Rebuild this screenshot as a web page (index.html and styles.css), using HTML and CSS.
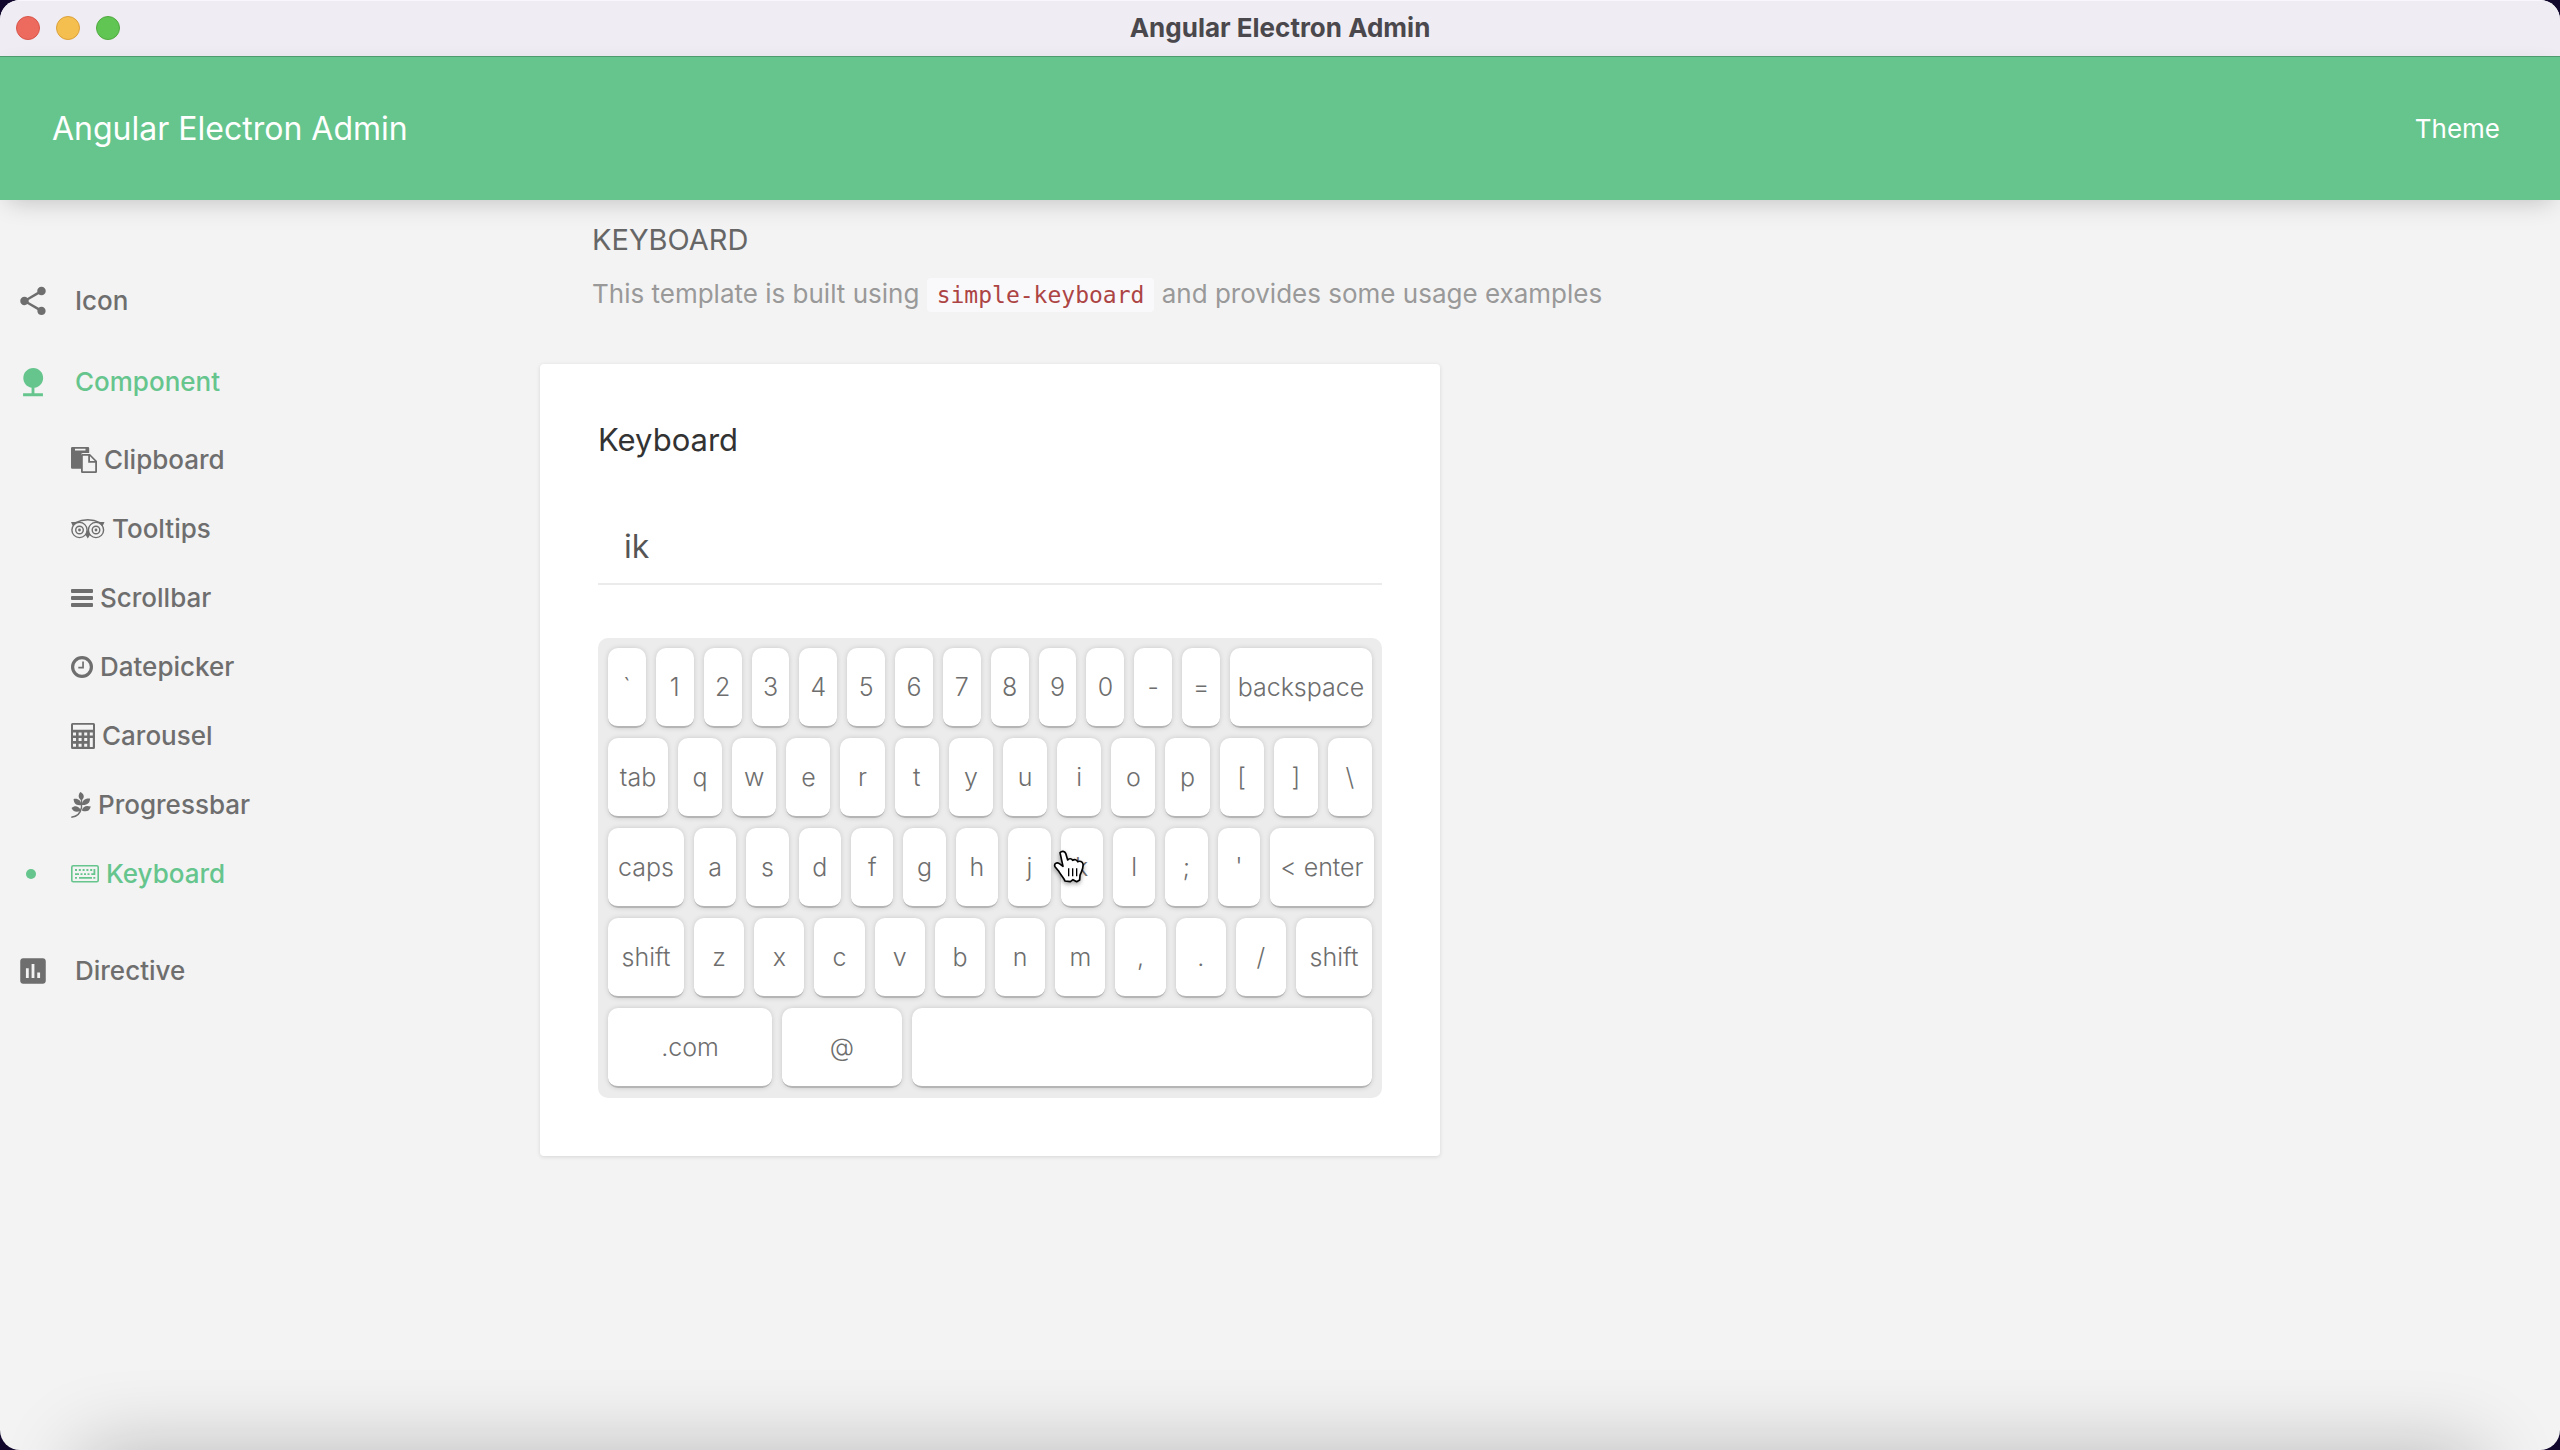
FILE: index.html
```html
<!DOCTYPE html>
<html lang="en">
<head>
<meta charset="utf-8">
<title>Angular Electron Admin</title>
<link rel="stylesheet" href="styles.css">
</head>
<body>
<div class="window">
  <div class="titlebar">
    <div class="lights">
      <button class="light light-close" aria-label="Close"></button>
      <button class="light light-min" aria-label="Minimize"></button>
      <button class="light light-max" aria-label="Zoom"></button>
    </div>
    <div class="window-title">Angular Electron Admin</div>
  </div>
  <header class="toolbar">
    <a class="brand" href="#">Angular Electron Admin</a>
    <button class="theme">Theme</button>
  </header>
  <div class="layout">
    <nav class="sidebar">
      <a class="item" href="#">
        <svg class="item-icon" viewBox="0 0 24 24"><path d="M18 16.08c-.76 0-1.44.3-1.96.77L8.91 12.7c.05-.23.09-.46.09-.7s-.04-.47-.09-.7l7.05-4.11c.54.5 1.25.81 2.04.81 1.66 0 3-1.34 3-3s-1.34-3-3-3-3 1.34-3 3c0 .24.04.47.09.7L8.04 9.81C7.5 9.31 6.79 9 6 9c-1.66 0-3 1.34-3 3s1.34 3 3 3c.79 0 1.5-.31 2.04-.81l7.12 4.16c-.05.21-.08.43-.08.65 0 1.61 1.31 2.92 2.92 2.92 1.61 0 2.92-1.31 2.92-2.92s-1.31-2.92-2.92-2.92z"/></svg>
        Icon
      </a>
      <a class="item active" href="#">
        <svg class="item-icon" viewBox="0 0 24 24"><path d="M13 16.12c3.47-.41 6.17-3.36 6.17-6.95 0-3.87-3.13-7-7-7s-7 3.13-7 7c0 3.47 2.52 6.34 5.83 6.89V20H5v2h14v-2h-6v-3.88z"/></svg>
        Component
      </a>
      <div class="submenu">
        <a class="sub" href="#">
          <svg width="26" height="26" viewBox="0 0 26 26"><path fill-rule="evenodd" d="M1.2 0H17a1.2 1.2 0 0 1 1.2 1.2V6H12a2 2 0 0 0-2 2v13.800H1.200A1.200 1.200 0 0 1 0 20.600V1.200A1.200 1.200 0 0 1 1.200 0zM4 1.800v1.800h10.500V1.800z"/><path fill-rule="evenodd" d="M11.200 7H19l7 7v10.800a1.200 1.200 0 0 1-1.200 1.200H11.200A1.200 1.200 0 0 1 10 24.800V8.200A1.200 1.200 0 0 1 11.200 7zm.6 1.800v15.400h12.400v-8.400h-7V8.800zM19 9.300V14h4.700z"/></svg>
          Clipboard
        </a>
        <a class="sub" href="#">
          <svg width="34" height="20" viewBox="0 0 34 20"><g fill="none" stroke="currentColor" stroke-width="1.400"><circle cx="8.500" cy="11" r="7.600"/><circle cx="25" cy="11" r="7.600"/><circle cx="8.500" cy="11" r="3.800"/><circle cx="25" cy="11" r="3.800"/><path d="M4 3.800Q16.800-2.200 29.500 3.800"/></g><circle cx="8.500" cy="11" r="1.400"/><circle cx="25" cy="11" r="1.400"/><path d="M0 3h6L2 7.500zM33.500 3h-6l4 4.500zM14.300 15.500L16.800 11l2.500 4.500-2.500 4z"/></svg>
          Tooltips
        </a>
        <a class="sub" href="#">
          <svg width="22" height="20" viewBox="0 0 22 20"><rect y="1" width="22" height="4" rx="1"/><rect y="8" width="22" height="4" rx="1"/><rect y="15" width="22" height="4" rx="1"/></svg>
          Scrollbar
        </a>
        <a class="sub" href="#">
          <svg width="22" height="22" viewBox="0 0 22 22"><circle cx="11" cy="11" r="9.400" fill="none" stroke="currentColor" stroke-width="3.200"/><path d="M11.200 5.500h1.700v7H7.300v-1.700h3.900z"/></svg>
          Datepicker
        </a>
        <a class="sub" href="#">
          <svg width="24" height="26" viewBox="0 0 24 26"><path fill-rule="evenodd" d="M1.500 0h21A1.500 1.500 0 0 1 24 1.500v23a1.500 1.500 0 0 1-1.500 1.500h-21A1.500 1.500 0 0 1 0 24.500v-23A1.500 1.500 0 0 1 1.500 0zM2 1.800v5h20v-5zM2 9.500v3h3v-3zm5.600 0v3h3v-3zm5.600 0v3h3v-3zm5.600 0v3h3v-3zM2 15v3h3v-3zm5.600 0v3h3v-3zm5.600 0v3h3v-3zm5.600 0v9h3v-9zM2 20.800v3h3v-3zm5.600 0v3h3v-3zm5.600 0v3h3v-3z"/></svg>
          Carousel
        </a>
        <a class="sub" href="#">
          <svg width="20" height="26" viewBox="0 0 20 26"><path d="M10.500 8.500C7 6 7 3 9.300 0c4 2 4.800 5.500 1.200 8.500zM10.500 13C5 14 2.800 11 2.600 7c4.500-.8 7.300 1.500 7.900 6zM11 13c-.2-4.500 3-7 8-6.500.2 4.500-3 7-8 6.500zM10 18.500c-4 2.500-7.500 1.500-9.500-2.500 3.500-2.800 7-2 9.500 2.500zM10.800 18.500c1-4 4-5.500 9-4-1 4.500-4.500 6-9 4z"/><path fill="none" stroke="currentColor" stroke-width="1.400" d="M10.500 7.500v8C9.500 21 6 24.800.3 25.200"/></svg>
          Progressbar
        </a>
        <a class="sub active current" href="#">
          <svg width="28" height="18" viewBox="0 0 28 18"><rect x=".8" y=".8" width="26.400" height="15.900" rx="1.400" fill="none" stroke="currentColor" stroke-width="1.600"/><path d="M4 4h2v2H4zM7.800 4h2v2h-2zM11.600 4h2v2h-2zM15.400 4h2v2h-2zM19.200 4h2v2h-2zM22.500 4h1.800v6h-4V8.200h2.200zM4 8.200h4v1.800H4zM9.500 8.200h2V10h-2zM13 8.200h2V10h-2zM16.500 8.200h2V10h-2zM4 12h2v1.800H4zM8 12h13v1.800H8zM22.300 12h2v1.800h-2z"/></svg>
          Keyboard
        </a>
      </div>
      <a class="item" href="#">
        <svg class="item-icon" viewBox="0 0 24 24"><path d="M19 3H5c-1.100 0-2 .9-2 2v14c0 1.100.9 2 2 2h14c1.100 0 2-.9 2-2V5c0-1.100-.9-2-2-2zM9 17H7v-7h2v7zm4 0h-2V7h2v10zm4 0h-2v-4h2v4z"/></svg>
        Directive
      </a>
    </nav>
    <main class="content">
      <section class="intro">
        <h1>KEYBOARD</h1>
        <p>This template is built using <code>simple-keyboard</code> and provides some usage examples</p>
      </section>
      <section class="card">
        <h2><label for="entry">Keyboard</label></h2>
        <input class="entry" id="entry" type="text" value="ik">
        <div class="keyboard">
          <div class="row">
            <button class="key">`</button><button class="key">1</button><button class="key">2</button><button class="key">3</button><button class="key">4</button><button class="key">5</button><button class="key">6</button><button class="key">7</button><button class="key">8</button><button class="key">9</button><button class="key">0</button><button class="key">-</button><button class="key">=</button><button class="key key-backspace">backspace</button>
          </div>
          <div class="row">
            <button class="key key-tab">tab</button><button class="key">q</button><button class="key">w</button><button class="key">e</button><button class="key">r</button><button class="key">t</button><button class="key">y</button><button class="key">u</button><button class="key">i</button><button class="key">o</button><button class="key">p</button><button class="key">[</button><button class="key">]</button><button class="key">\</button>
          </div>
          <div class="row">
            <button class="key key-shift">caps</button><button class="key">a</button><button class="key">s</button><button class="key">d</button><button class="key">f</button><button class="key">g</button><button class="key">h</button><button class="key">j</button><button class="key">k<svg class="pointer" viewBox="160 146 96 108"><path d="M181 157c5-6 14-5 17 2l6 20c3-5 12-5 15 1 5-4 13-2 15 4 6-3 15 0 16 7 2 16-6 24-9 34l-1 14-9 5-11-6-8 6-16-2c-3-9-12-17-20-31l-10-12c-4-9 5-14 13-9l11 8z"/><path class="pointer-lines" d="M207 204v24M219 204v24M231 204v24"/></svg></button><button class="key">l</button><button class="key">;</button><button class="key">'</button><button class="key key-enter">&lt; enter</button>
          </div>
          <div class="row">
            <button class="key key-shift">shift</button><button class="key">z</button><button class="key">x</button><button class="key">c</button><button class="key">v</button><button class="key">b</button><button class="key">n</button><button class="key">m</button><button class="key">,</button><button class="key">.</button><button class="key">/</button><button class="key key-shift">shift</button>
          </div>
          <div class="row">
            <button class="key key-com">.com</button><button class="key key-at">@</button><button class="key" aria-label="space"></button>
          </div>
        </div>
      </section>
    </main>
  </div>
</div>
</body>
</html>
```
FILE: styles.css
```css
* { box-sizing: border-box; }

body {
  margin: 0;
  background: #12082e;
  font-family: Inter, "Liberation Sans", sans-serif;
  font-size: 26px;
  color: #6e6e6e;
}

a { color: inherit; text-decoration: none; }
button { border: 0; padding: 0; background: none; font: inherit; color: inherit; }
svg { flex: none; fill: currentColor; }

.window {
  position: relative;
  display: flex;
  flex-direction: column;
  min-height: 100vh;
  overflow: hidden;
  border-radius: 20px;
  background: #f3f3f3;
}

/* soft shade along the bottom edge */
.window::after {
  content: "";
  position: absolute;
  left: 80px;
  right: 80px;
  bottom: -100px;
  height: 100px;
  box-shadow: 0 0 80px rgba(0, 0, 0, .24);
}

.titlebar {
  display: grid;
  grid-template-columns: 1fr auto 1fr;
  align-items: center;
  height: 56px;
  padding: 0 16px 2px;
  border-top: 1px solid #f8f7fb;
  background: #efedf3;
}

.lights { display: flex; gap: 16px; }
.light { width: 24px; height: 24px; border-radius: 50%; border: 1px solid #d8564b; background: #ed6a5f; }
.light-min { border-color: #dca03a; background: #f5bf4f; }
.light-max { border-color: #50a93f; background: #61c554; }
.window-title { font-weight: 700; line-height: 32px; color: #4a484c; }

.toolbar {
  position: relative;
  display: flex;
  align-items: center;
  justify-content: space-between;
  height: 144px;
  padding: 0 60px 0 52px;
  border-top: 1px solid #4e9b6e;
  background: #65c58d;
  color: #fff;
  box-shadow: 0 8px 24px -8px rgba(0, 0, 0, .24);
}

.brand { font-size: 32px; }

.layout { display: flex; flex: 1; }

.sidebar { flex: none; width: 540px; padding-top: 60px; font-weight: 500; }

.item {
  display: flex;
  align-items: center;
  gap: 25px;
  height: 81px;
  padding-left: 16px;
}
.item-icon { width: 34px; height: 34px; }
.active { color: #65c58d; }

.submenu { padding: 3px 0 22px; }
.sub {
  display: flex;
  align-items: center;
  gap: 7px;
  height: 69px;
  padding-left: 71px;
}
.current { position: relative; }
.current::before {
  content: "";
  position: absolute;
  left: 26px;
  width: 10px;
  height: 10px;
  border-radius: 50%;
  background: currentColor;
}

.content { flex: 1; min-width: 0; }

.intro { padding: 20px 52px 49px; }
.intro h1 { margin: 0 0 14px; font-size: 29px; font-weight: 400; line-height: 40px; color: #666; }
.intro p { margin: 0; line-height: 40px; color: #999; }
.intro code {
  padding: 4px 10px;
  border-radius: 4px;
  background: #f9f9fb;
  font-family: "DejaVu Sans Mono", monospace;
  font-size: 23px;
  color: #ad4444;
}

.card {
  width: 100%;
  max-width: 900px;
  padding: 56px 58px 58px;
  border-radius: 4px;
  background: #fff;
  box-shadow: 0 1px 4px rgba(0, 0, 0, .12);
}
.card h2 { margin: 0 0 32px; font-size: 31px; font-weight: 400; line-height: 40px; color: #333; }

.entry {
  display: block;
  width: 100%;
  height: 93px;
  margin-bottom: 53px;
  padding: 18px 26px 0;
  border: 0;
  border-bottom: 2px solid #ebebeb;
  background: none;
  font: inherit;
  font-size: 32px;
  color: #555;
  outline: none;
}

.keyboard {
  display: flex;
  flex-direction: column;
  gap: 10px;
  padding: 10px;
  border-radius: 10px;
  background: #ececec;
  font-size: 25px;
  font-weight: 300;
}
.row { display: flex; gap: 10px; }
.key {
  position: relative;
  flex: 1;
  min-width: 0;
  height: 80px;
  border-bottom: 2px solid #b5b5b5;
  border-radius: 10px;
  background: #fff;
  box-shadow: 0 0 6px -2px rgba(0, 0, 0, .3);
  white-space: nowrap;
}
.key-backspace { flex: none; width: 142px; }
.key-tab { flex: none; width: 60px; }
.key-shift { flex: none; width: 76px; }
.key-enter { flex: none; width: 104px; margin-right: -2px; }
.key-com { flex: none; width: 164px; }
.key-at { flex: none; width: 120px; }

.pointer {
  position: absolute;
  left: -8px;
  top: 21px;
  width: 32px;
  height: 36px;
  overflow: visible;
  fill: #fff;
  stroke: #000;
  stroke-width: 5;
  stroke-linejoin: round;
  filter: drop-shadow(0 2px 2px rgba(0, 0, 0, .35));
}
.pointer-lines { stroke-width: 4; }
```
